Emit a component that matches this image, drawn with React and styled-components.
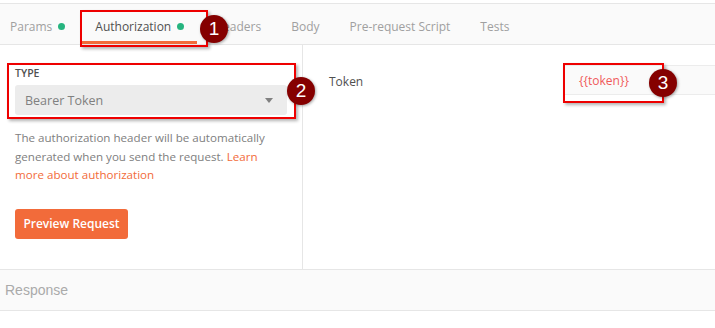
import { createGlobalStyle, styled } from "styled-components";

const GlobalStyle = createGlobalStyle`
  html, body {
    margin: 0;
    padding: 0;
    background: #fff;
  }
  body {
    font-family: "Open Sans", "Noto Sans", sans-serif;
    color: #505050;
  }
`;

const Page = styled.div`
  position: relative;
  width: 715px;
  height: 328px;
  padding-top: 3px;
  box-sizing: border-box;
  overflow: hidden;
`;

const TabBar = styled.div`
  display: flex;
  gap: 4px;
  height: 40px;
  background: #fafafa;
  border-top: 1px solid #e6e6e6;
  border-bottom: 1px solid #e6e6e6;
  box-sizing: content-box;
`;

const Tab = styled.div`
  display: flex;
  align-items: center;
  gap: 6px;
  padding: 7px 13px 0;
  font-size: 12px;
  color: ${(p) => (p.$active ? "#505050" : "#a0a0a0")};
  border-bottom: 3px solid ${(p) => (p.$active ? "#f26b3a" : "transparent")};
  &:first-child {
    padding-left: 10px;
  }
`;

const Dot = styled.span`
  width: 7px;
  height: 7px;
  border-radius: 50%;
  background: #26b47f;
`;

const Main = styled.div`
  display: flex;
  height: 224px;
`;

const LeftPane = styled.div`
  width: 303px;
  flex-shrink: 0;
  border-right: 1px solid #e6e6e6;
  padding: 20px 15px 0;
  box-sizing: border-box;
`;

const FieldLabel = styled.div`
  font-size: 10.5px;
  font-weight: 600;
  line-height: 14px;
  margin-top: 1px;
  color: #505050;
`;

const Select = styled.div`
  display: flex;
  align-items: center;
  justify-content: space-between;
  margin-top: 5px;
  height: 30px;
  padding: 0 14px 0 10px;
  background: #ececec;
  border-radius: 3px;
  font-size: 12.5px;
  color: #808080;
`;

const Caret = styled.span`
  width: 0;
  height: 0;
  border-left: 4.5px solid transparent;
  border-right: 4.5px solid transparent;
  border-top: 5px solid #808080;
`;

const Description = styled.p`
  margin: 14px 0 0;
  font-size: 11.6px;
  line-height: 18.5px;
  color: #808080;
`;

const Link = styled.a`
  color: #f26b3a;
  text-decoration: none;
`;

const PrimaryButton = styled.button`
  margin-top: 24px;
  height: 30px;
  width: 113px;
  border: none;
  border-radius: 3px;
  background: #f26b3a;
  color: #fff;
  font-family: "Open Sans", sans-serif;
  font-size: 12px;
  font-weight: 600;
`;

const RightPane = styled.div`
  flex: 1;
  padding: 20px 0 0 26px;
`;

const ParamRow = styled.div`
  display: flex;
  align-items: center;
  height: 30px;
`;

const ParamKey = styled.div`
  width: 235px;
  font-size: 12px;
  color: #505050;
  margin-top: 2px;
`;

const ParamInput = styled.div`
  flex: 1;
  height: 30px;
  display: flex;
  align-items: center;
  padding-left: 14px;
  background: #fafafa;
  border: 1px solid #ececec;
  border-right: none;
  box-sizing: border-box;
  font-size: 12px;
  color: #f05a5a;
`;

const ResponseBar = styled.div`
  display: flex;
  align-items: center;
  height: 40px;
  padding-left: 5px;
  background: #fafafa;
  border-top: 1px solid #e6e6e6;
  border-bottom: 1px solid #e6e6e6;
  font-family: "Liberation Sans", Arial, sans-serif;
  font-size: 14px;
  color: #aaaaaa;
`;

const Highlight = styled.div`
  position: absolute;
  left: ${(p) => p.$x}px;
  top: ${(p) => p.$y}px;
  width: ${(p) => p.$w}px;
  height: ${(p) => p.$h}px;
  border: 2px solid #ee0000;
  box-sizing: border-box;
  box-shadow: 2px 2px 3px rgba(0, 0, 0, 0.3);
  pointer-events: none;
`;

const Marker = styled.div`
  position: absolute;
  left: ${(p) => p.$x - 14}px;
  top: ${(p) => p.$y - 14}px;
  width: 28px;
  height: 28px;
  border-radius: 50%;
  background: #850000;
  box-shadow: 1px 1px 3px rgba(0, 0, 0, 0.35);
  color: #fff;
  display: flex;
  align-items: center;
  justify-content: center;
  font-family: "Liberation Sans", Arial, sans-serif;
  font-size: 19px;
`;

const tabs = [
  { name: "Params", dot: true },
  { name: "Authorization", dot: true, active: true },
  { name: "Headers" },
  { name: "Body" },
  { name: "Pre-request Script" },
  { name: "Tests" },
];

const App = () => {
  return (
    <>
      <GlobalStyle />
      <Page>
        <TabBar>
          {tabs.map((t) => (
            <Tab key={t.name} $active={t.active}>
              {t.name}
              {t.dot && <Dot />}
            </Tab>
          ))}
        </TabBar>
        <Main>
          <LeftPane>
            <FieldLabel>TYPE</FieldLabel>
            <Select>
              Bearer Token
              <Caret />
            </Select>
            <Description>
              The authorization header will be automatically generated when you
              send the request. <Link href="#">Learn more about authorization</Link>
            </Description>
            <PrimaryButton>Preview Request</PrimaryButton>
          </LeftPane>
          <RightPane>
            <ParamRow>
              <ParamKey>Token</ParamKey>
              <ParamInput>{"{{token}}"}</ParamInput>
            </ParamRow>
          </RightPane>
        </Main>
        <ResponseBar>Response</ResponseBar>

        <Highlight $x={80} $y={10} $w={128} $h={37} />
        <Marker $x={214} $y={29}>1</Marker>
        <Highlight $x={7} $y={63} $w={289} $h={56} />
        <Marker $x={301} $y={91}>2</Marker>
        <Highlight $x={563} $y={63} $w={101} $h={40} />
        <Marker $x={663} $y={83}>3</Marker>
      </Page>
    </>
  );
};

export default App;
